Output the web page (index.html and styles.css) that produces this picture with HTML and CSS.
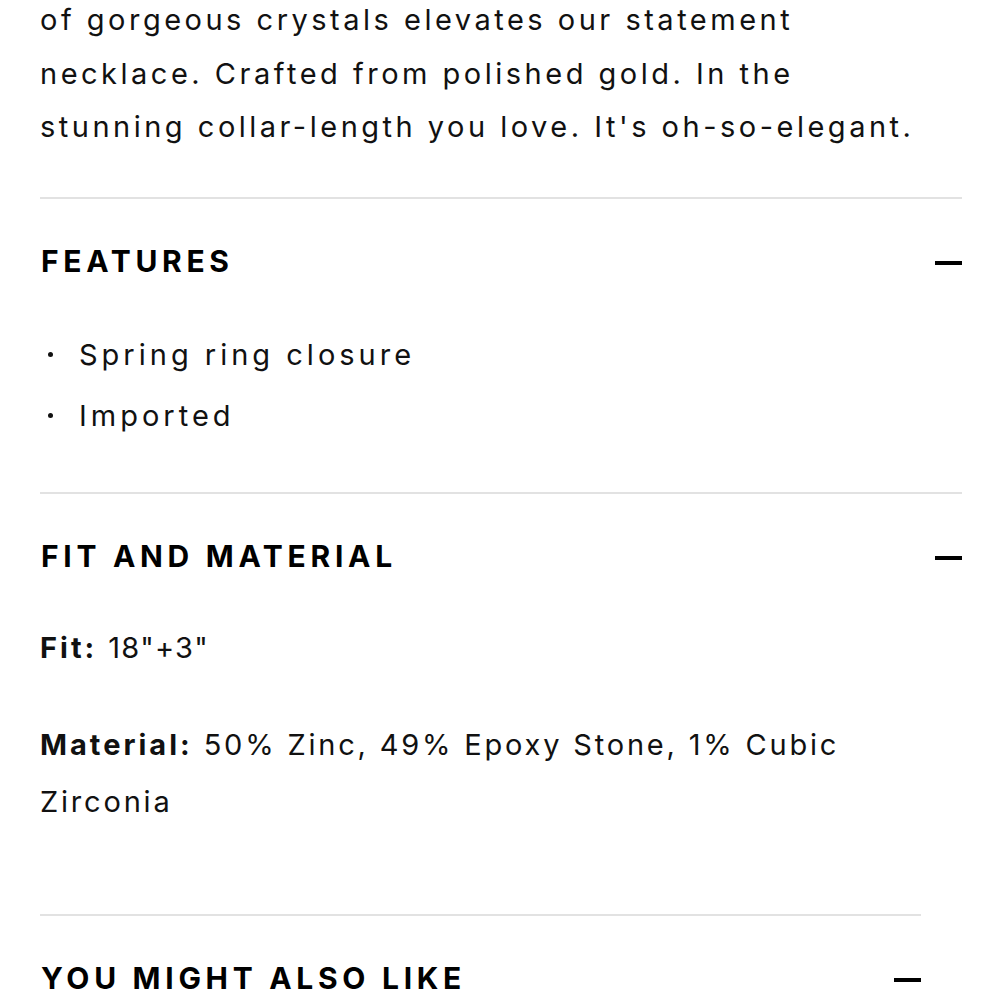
FILE: index.html
```html
<!DOCTYPE html>
<html lang="en">
<head>
<meta charset="utf-8">
<title>Product details</title>
<link rel="stylesheet" href="styles.css">
</head>
<body>
<main class="page">
  <p class="intro">of gorgeous crystals elevates our statement<br>necklace. Crafted from polished gold. In the<br>stunning collar-length you love. It's oh-so-elegant.</p>

  <section class="section">
    <div class="section-head">
      <h2 class="section-title">FEATURES</h2>
      <span class="minus"></span>
    </div>
    <ul class="features">
      <li class="feature">Spring ring closure</li>
      <li class="feature">Imported</li>
    </ul>
  </section>

  <section class="section">
    <div class="section-head">
      <h2 class="section-title">FIT AND MATERIAL</h2>
      <span class="minus"></span>
    </div>
    <p class="spec spec-fit"><strong>Fit:</strong> <span class="num">18"+3"</span></p>
    <p class="spec spec-material"><strong>Material:</strong> 50% Zinc, 49% Epoxy Stone, 1% Cubic<br>Zirconia</p>
  </section>

  <section class="section section-narrow">
    <div class="section-head">
      <h2 class="section-title">YOU MIGHT ALSO LIKE</h2>
      <span class="minus"></span>
    </div>
  </section>
</main>
</body>
</html>
```

FILE: styles.css
```css
html, body {
  margin: 0;
  padding: 0;
  background: #ffffff;
}

body {
  font-family: Inter, "Noto Sans", "DejaVu Sans", sans-serif;
  color: #111111;
  overflow: hidden;
}

.page {
  padding: 0 38px 0 40px;
}

.intro {
  margin: -7px 0 0 0;
  font-size: 29px;
  line-height: 53.5px;
  letter-spacing: 3.5px;
  white-space: nowrap;
}

.section {
  margin-top: 43px;
  border-top: 2px solid #e2e2e2;
  padding-top: 42px;
  padding-bottom: 3px;
}

.section + .section {
  margin-top: 0;
}

.section-narrow {
  margin-right: 41px;
}

.section-head {
  display: flex;
  align-items: center;
  justify-content: space-between;
}

.section-title {
  margin: 0 0 0 1px;
  font-size: 30px;
  line-height: 40px;
  font-weight: 700;
  letter-spacing: 4.7px;
  color: #000000;
}

.minus {
  display: block;
  width: 27px;
  height: 4px;
  margin-top: 4px;
  background: #000000;
}

.features {
  list-style: none;
  margin: 43px 0 43px 0;
  padding: 0;
}

.feature {
  display: flex;
  align-items: center;
  font-size: 29px;
  line-height: 61px;
  letter-spacing: 4px;
}

.feature::before {
  content: "";
  display: block;
  width: 5px;
  height: 5px;
  border-radius: 50%;
  background: #111111;
  margin: 0 26px 0 8px;
  flex: none;
}

.spec {
  margin: 0;
  font-size: 29px;
  line-height: 57px;
  letter-spacing: 2.8px;
  white-space: nowrap;
}

.spec strong {
  font-weight: 700;
  letter-spacing: 3px;
}

.spec .num {
  letter-spacing: 1.2px;
}

.spec-fit {
  margin-top: 43px;
}

.spec-material {
  margin-top: 40px;
  margin-bottom: 81px;
}
```
